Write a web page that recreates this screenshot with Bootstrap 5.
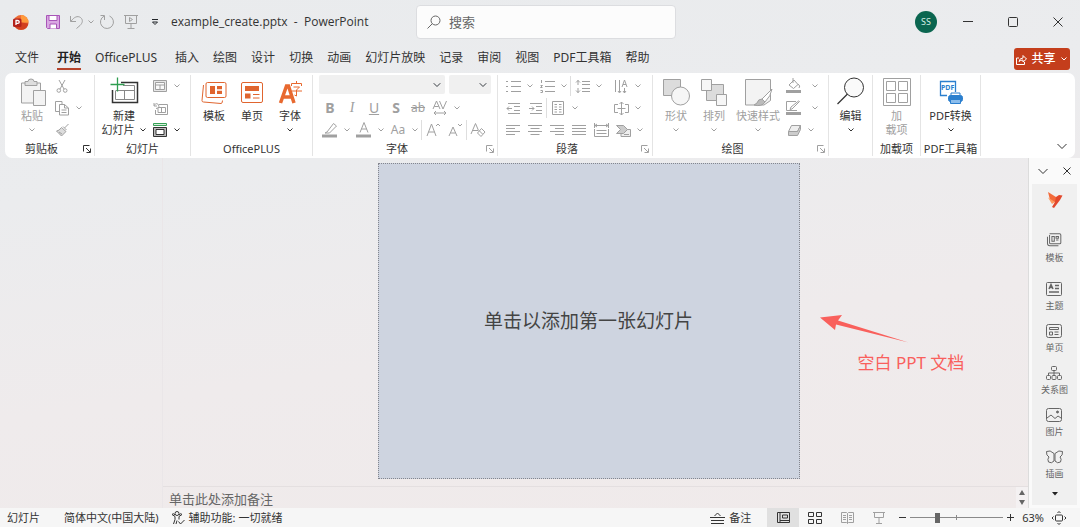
<!DOCTYPE html>
<html lang="zh-CN">
<head>
<meta charset="utf-8">
<meta name="viewport" content="width=device-width, initial-scale=1">
<title>example_create.pptx - PowerPoint</title>
<link href="https://cdn.jsdelivr.net/npm/bootstrap@5.3.0/dist/css/bootstrap.min.css" rel="stylesheet">
<style>
body{font-family:"Noto Sans","Noto Sans CJK SC",sans-serif;font-size:12px;line-height:16px;color:#333;background:linear-gradient(172deg,#e9ebed 0%,#ebecee 30%,#efebec 62%,#f0eaea 100%)}
button{font:inherit;color:inherit;background:none;border:0;padding:0}
svg{display:block;fill:none;stroke:currentColor;flex:none}
svg.solid{stroke:none}
.off{color:#a0a0a0}
.titlebar{height:44px;padding-left:12px}
.qat button{width:24px;height:22px}
.qat .undo{width:22px}
.qat .undo-list{width:8px;height:22px}
.doc-title{font-family:"Open Sans","Noto Sans CJK SC",sans-serif}
.search-box{width:260px;height:34px;background:#fcfcfc;border:1px solid #dcdde0;border-radius:4px;padding:0 10px;color:#666}
.search-box input{font-size:13px;line-height:18px;border:0;background:none;outline:0;min-width:0}
.search-box input::placeholder{color:#666;opacity:1}
.side-part{flex:1 1 0;min-width:0}
.avatar{width:22px;height:22px;background:#0b6650;color:#d8efe6;font-size:9px}
.tabs-row{height:29px;padding:0 10px 0 15px}
.tab-list{gap:14px;padding-top:5px}
.tabs-row a{color:#333;text-decoration:none;line-height:18px;white-space:nowrap;padding-bottom:1px;border-bottom:2px solid transparent}
.tabs-row a.active{font-weight:700;border-color:#b5432b;color:#222}
.share{background:#c43e1c;color:#fff;height:22px;width:56px;border-radius:3px;font-weight:500}
.ribbon{background:#fff;border-radius:7px;margin:0 5px;height:85px}
.group{border-right:1px solid #e4e4e4;margin:2px 0;display:flex;flex-direction:column;font-size:11px;line-height:14px;flex:none}
.g-body{height:66px;display:flex}
.g-font{padding:0 6px}
.g-label{height:15px;display:flex;align-items:center}
.g-label span{flex:1;text-align:center;white-space:nowrap}
.g-label button{width:16px;padding-left:4px}
.big{width:38px;padding-top:2px;display:flex;flex-direction:column;align-items:center;white-space:nowrap}
.big>svg:first-child{margin-bottom:2px}
.line{height:22px;display:flex;align-items:center}
.cell{width:22px;height:22px;display:flex;align-items:center;justify-content:center;flex:none}
.win-btn{width:45px;height:30px;display:flex;align-items:center;justify-content:center}
.drop{width:12px;height:22px;display:flex;align-items:center;justify-content:center;flex:none}
.vr-line{width:1px;height:20px;background:#dedede}
.txt{font-size:14px;line-height:22px}
.font-pick,.font-pick:disabled{background-color:#f0f0f0;border:0;border-radius:2px;height:19px;padding:0;background-size:8px;background-position:right 4px center}
.thumbs{width:163px;border-right:1px solid #eae6e8}
.stage{display:grid;grid-template-columns:1fr auto 1fr;padding:5px 14px 7px 0;flex:1 1 auto}
.slide{height:316px;aspect-ratio:422/316;background:#ced4e0;border:1px dotted #84868e;font-size:19px;line-height:26px;color:#444}
.note-mark{color:#f9605c;font-size:17px;line-height:24px;padding:152px 0 0 20px}
.note-mark p{margin:6px 0 0 38px;white-space:nowrap}
.notes{height:22px;border-top:1px solid #e4dfe0}
.notes input{font-size:13px;line-height:18px;border:0;background:none;padding:2px 6px 0;outline:0}
.notes input::placeholder{color:#666;opacity:1}
.spin{width:12px;background:#f4f1f2}
.dock{width:52px;background:#fafafa;border-left:1px solid #dcdcdc;padding:0 3px 3px}
.dock-head{height:26px;padding:0 6px}
.dock-list{background:#f0f0f0;font-size:9px;line-height:12px;color:#666}
.dock-list button{height:42px;display:flex;flex-direction:column;align-items:center;gap:4px;padding-top:4px}
.status{height:19px;background:#f6f6f6;font-size:11px;padding:0 14px 0 7px}
.view-btn{width:32px;height:19px;display:flex;align-items:center;justify-content:center}
.view-btn.active{background:#e0e0e0}
.zoom-range{appearance:none;width:93px;height:12px;background:linear-gradient(#8a8a8a,#8a8a8a) center/100% 1px no-repeat,linear-gradient(#8a8a8a,#8a8a8a) center/1px 5px no-repeat;margin:0}
.zoom-range::-webkit-slider-thumb{appearance:none;width:5px;height:10px;background:#666}
</style>
</head>
<body class="d-flex flex-column min-vh-100">
<svg width="0" height="0" class="position-absolute" aria-hidden="true">
<symbol id="chev" viewBox="0 0 8 6"><path d="M1.500 1.500 4 4 6.500 1.500"/></symbol>
<symbol id="launch" viewBox="0 0 10 10"><path d="M1.500 7.500V1.500H7.500M4 4l4 4M8.500 4.500v4h-4"/></symbol>
<symbol id="tpl" viewBox="0 0 30 30"><rect x="7" y="5.500" width="20" height="15" rx="1.500"/><path d="M4.500 8 3 23.500q0 1.500 1.500 1.500L22 26.500q1.500 0 1.500-3"/><path fill="currentColor" stroke="none" d="M11 9h5v8h-5zM18 9h5v3.200h-5zM18 13.700h5V17h-5z"/></symbol>
<symbol id="page" viewBox="0 0 30 30"><rect x="4.500" y="5.500" width="21" height="20" rx="1.500"/><path d="M8 9h14v5H8zM8 16.500h5.500v5H8z" fill="currentColor" stroke="none"/><path d="M16 17.500h6.500M16 21h6.500"/></symbol>
</svg>

<header class="titlebar d-flex align-items-center">
  <div class="side-part d-flex align-items-center">
    <svg width="17" height="17" viewBox="0 0 17 17" class="solid me-2"><circle cx="9" cy="8.500" r="7.500" fill="#ed6c35"/><path d="M9 1a7.500 7.500 0 0 1 7.500 7.500H9z" fill="#ff9a3c"/><path d="M2 11a7.500 7.500 0 0 0 14.400-1.500L9 8.500z" fill="#d2401f"/><rect x="1" y="4.500" width="8.500" height="8.500" rx="1.500" fill="#b4231b"/><path d="M4 11V6.500h1.800a1.400 1.400 0 0 1 0 2.900H4" stroke="#fff" stroke-width="1.300"/></svg>
    <div class="qat off d-flex align-items-center">
      <button class="cell ms-1" aria-label="保存"><svg width="16" height="16" viewBox="0 0 16 16" color="#a855b8"><path d="M1.500 1.500h13v13h-12l-1-1z" fill="#d9a8e2"/><path d="M4 1.500h8v5H4zM5 14.500v-4.500h6.500v4.500" fill="#fff"/></svg></button>
      <button class="cell undo" aria-label="撤消"><svg width="15" height="16" viewBox="0 0 15 16"><path d="M1.500 2v5.500H7M2 7.300C5 3 8.500 1.500 11.500 3.500 14.500 6 13.500 9 11 11.500L7.500 14.500"/></svg></button>
      <button class="undo-list" aria-label="撤消列表"><svg width="8" height="6"><use href="#chev"/></svg></button>
      <button class="cell" aria-label="恢复"><svg width="16" height="16" viewBox="0 0 16 16"><path d="M10.500 2a6.500 6.500 0 1 1-5.500.2M1.500 1.500H5.500V6"/></svg></button>
      <button class="cell" aria-label="从头开始"><svg width="16" height="16" viewBox="0 0 16 16"><path d="M1 1.500h14M2.500 1.500v8h11v-8M8 9.500v5M4.500 14.500h7M6.500 3.500v4l3-2z"/></svg></button>
      <button class="cell text-dark" aria-label="自定义"><svg width="8" height="8" viewBox="0 0 8 8"><path d="M1 1.500h6M1.500 4 4 6.500 6.500 4z"/></svg></button>
    </div>
    <span class="doc-title ms-1 text-nowrap">example_create.pptx&nbsp; - &nbsp;PowerPoint</span>
  </div>
  <label class="search-box d-flex align-items-center gap-2"><svg width="14" height="14" viewBox="0 0 14 14"><circle cx="8.500" cy="5.500" r="4.500"/><path d="M5.300 8.700.5 13.500"/></svg><input type="search" class="p-0" placeholder="搜索" aria-label="搜索"></label>
  <div class="side-part d-flex align-items-center justify-content-end">
    <button class="avatar rounded-circle me-2" aria-label="帐户">SS</button>
    <button class="win-btn" aria-label="最小化"><svg width="10" height="10"><path d="M0 4.500h10"/></svg></button>
    <button class="win-btn" aria-label="最大化"><svg width="10" height="10"><rect x=".5" y=".5" width="9" height="9" rx="1"/></svg></button>
    <button class="win-btn" aria-label="关闭"><svg width="10" height="10"><path d="m.5.5 9 9m0-9-9 9"/></svg></button>
  </div>
</header>

<nav class="tabs-row d-flex align-items-start justify-content-between" aria-label="功能区">
  <div class="tab-list d-flex">
    <a href="#" class="me-1">文件</a><a href="#" class="active">开始</a><a href="#" class="me-1">OfficePLUS</a><a href="#">插入</a><a href="#">绘图</a><a href="#">设计</a><a href="#">切换</a><a href="#">动画</a><a href="#">幻灯片放映</a><a href="#">记录</a><a href="#">审阅</a><a href="#">视图</a><a href="#">PDF工具箱</a><a href="#">帮助</a>
  </div>
  <button class="share d-flex align-items-center justify-content-center gap-1 mt-1"><svg width="11" height="11" viewBox="0 0 11 11"><path d="M3 4H.500v6.500h8V8M3 7.500Q3.500 4 7 4V1.500L10.500 5 7 8V6Q4.500 6 3 7.500z"/></svg>共享<svg width="8" height="6"><use href="#chev"/></svg></button>
</nav>

<section class="ribbon d-flex" aria-label="开始">
  <div class="group" style="width:90px">
    <div class="g-body off ps-2">
      <button class="big"><svg width="30" height="30" viewBox="0 0 30 30"><path d="M4.500 6h19v20h-19z" fill="#f3f3f3"/><path d="M8 8.500V4.500h3q0-2.500 3-2.500t3 2.500h3v4z" fill="#ddd"/><path d="M16.500 13.500h12v15h-12z" fill="#f3f3f3"/></svg>粘贴<svg width="8" height="14" viewBox="0 -4 8 14"><use href="#chev" width="8" height="6"/></svg></button>
      <div>
        <button class="cell" aria-label="剪切"><svg width="14" height="14" viewBox="0 0 14 14"><path d="m4 1 5 9M10 1 5 10"/><circle cx="3.800" cy="11.500" r="1.800"/><circle cx="10.200" cy="11.500" r="1.800"/></svg></button>
        <button class="cell" aria-label="复制"><svg width="16" height="16" viewBox="0 0 16 16"><path d="M5 11.500H1.500v-10H8V4M5.500 4.500h5l4 3.500v7h-9zM10.500 4.500V8h4M7.500 10h5M7.500 12.500h5"/></svg></button>
        <button class="cell" aria-label="格式刷"><svg width="15" height="14" viewBox="0 0 15 14"><path d="m13.500 1-4 4M6.500 4.500l4.500 4-4.500 4.500L1.500 8Q4 8 6.500 4.500z" fill="#ddd"/><path d="M8 3.500l3.500 3.500M4 9l3 2"/></svg></button>
      </div>
      <button class="drop align-self-center" aria-label="复制选项"><svg width="8" height="6"><use href="#chev"/></svg></button>
    </div>
    <div class="g-label"><span>剪贴板</span><button aria-label="剪贴板选项"><svg width="10" height="10"><use href="#launch"/></svg></button></div>
  </div>

  <div class="group" style="width:96px">
    <div class="g-body ps-1">
      <button class="big" style="width:50px"><svg width="30" height="30" viewBox="0 0 30 30"><path d="M12 5.500h16.500v20h-25V13" stroke-width="1.500"/><path d="M14 8.500h11.500v14h-19V14M6.500 13.500h19M15.500 13.500v9" stroke="#888"/><path d="M8.500.500v14M1.500 7.500h14" stroke="#2e9e50" stroke-width="1.300"/></svg>新建<span class="d-flex align-items-center gap-1">幻灯片<svg width="8" height="6"><use href="#chev"/></svg></span></button>
      <div>
        <div class="line off"><button class="cell" aria-label="版式"><svg width="14" height="12"><path d="M.5.5h13v11H.5z" fill="#e7e7e7"/><path d="M2.500 2.500h9v7h-9zM2.500 5h9M7 5v4.500" fill="#fafafa"/></svg></button><button class="drop" aria-label="版式列表"><svg width="8" height="6"><use href="#chev"/></svg></button></div>
        <div class="line off"><button class="cell" aria-label="重置"><svg width="15" height="13"><path d="M6 2.500h8.500v10h-12V8M5 5.500h7.500v5H5zM8.500 5.500v5M1 1v3h3M1 3.500Q4 0 5.500 3T3 6.500"/></svg></button></div>
        <div class="line"><button class="cell" aria-label="节"><svg width="14" height="14"><path d="M.5.5h13v2H.5z" stroke="#35a055" fill="#d9efdf"/><path d="M.5 4.500h13v9H.5z" fill="#bbb"/><path d="M3 6.500h8v5H3z" fill="#fff"/></svg></button><button class="drop" aria-label="节列表"><svg width="8" height="6"><use href="#chev"/></svg></button></div>
      </div>
    </div>
    <div class="g-label"><span>幻灯片</span></div>
  </div>

  <div class="group" style="width:122px">
    <div class="g-body ps-1">
      <button class="big"><svg width="30" height="30" color="#e0652f"><use href="#tpl"/></svg>模板</button>
      <button class="big"><svg width="30" height="30" color="#e0652f"><use href="#page"/></svg>单页</button>
      <button class="big"><svg width="30" height="30" viewBox="0 0 30 30" color="#e8692f"><path d="m5.500 26 6-17h2l5.500 17M8 20h9" stroke-width="3.500"/><path d="M21.500 4v2M16.500 9V6.500h10V9M18.500 10h6l-3 3v6l-2-1M16.500 14h10.500"/></svg>字体<svg width="8" height="14" viewBox="0 -4 8 14"><use href="#chev" width="8" height="6"/></svg></button>
    </div>
    <div class="g-label"><span>OfficePLUS</span></div>
  </div>

  <div class="group" style="width:185px">
    <div class="g-body g-font off flex-column">
      <div class="line align-items-start gap-1"><select class="form-select font-pick" style="width:128px" disabled aria-label="字体"></select><select class="form-select font-pick" style="width:43px" disabled aria-label="字号"></select></div>
      <div class="line txt"><button class="cell fw-bold">B</button><button class="cell fst-italic" style="font-family:'Liberation Serif',serif">I</button><button class="cell text-decoration-underline">U</button><button class="cell fw-bold">S</button><button class="cell text-decoration-line-through" style="font-size:12px">ab</button><button class="cell" aria-label="字符间距"><svg width="16" height="16" viewBox="0 0 16 16"><path d="m1 9 3.500-8L8 9M2.200 6.500h4.500M7.500 1 11 9l3.500-8M2 13h12M4 11l-2 2 2 2M12 11l2 2-2 2"/></svg></button><button class="drop" aria-label="间距列表"><svg width="8" height="6"><use href="#chev"/></svg></button></div>
      <div class="line txt"><button class="cell" aria-label="突出显示"><svg width="16" height="16"><path d="M5 10 11.500 1.500l3 2.500L7.500 11H3z"/><path d="M0 14h15" stroke-width="3"/></svg></button><button class="drop" aria-label="突出显示列表"><svg width="8" height="6"><use href="#chev"/></svg></button><button class="cell" aria-label="字体颜色"><svg width="16" height="16"><path d="m4 10.500 4-10 4 10M5.300 7h5.400"/><path d="M0 14h15" stroke-width="3"/></svg></button><button class="drop" aria-label="颜色列表"><svg width="8" height="6"><use href="#chev"/></svg></button><button class="cell" style="font-size:12px">Aa</button><button class="drop" aria-label="大小写列表"><svg width="8" height="6"><use href="#chev"/></svg></button><i class="vr-line"></i><button class="cell" aria-label="增大字号"><svg width="16" height="16"><path d="m2 14 4.500-12L11 14M3.500 10h6M11 4l2-2 2 2"/></svg></button><button class="cell" aria-label="减小字号"><svg width="16" height="16"><path d="m2 14 4-9 4 9M3.500 11h5M11 2l2 2 2-2"/></svg></button><i class="vr-line"></i><button class="cell" aria-label="清除格式"><svg width="16" height="16"><path d="M1 12 5.500 1.500 8.500 8.500M2.700 8.500H8M7.500 11l4-4.500 3.500 3.500-4 4.500zM9.500 9l3 3"/></svg></button></div>
    </div>
    <div class="g-label"><span>字体</span><button class="off" aria-label="字体选项"><svg width="10" height="10"><use href="#launch"/></svg></button></div>
  </div>

  <div class="group" style="width:155px">
    <div class="g-body off flex-column ps-1">
      <div class="line"><button class="cell" aria-label="项目符号"><svg width="15" height="13"><path d="M0 1.500h2M0 6.500h2M0 11.500h2M5 1.500h10M5 6.500h10M5 11.500h10"/></svg></button><button class="drop" aria-label="项目符号列表"><svg width="8" height="6"><use href="#chev"/></svg></button><button class="cell" aria-label="编号"><svg width="15" height="13"><path d="M1.500 0v3M.5 5.500h2l-2 2h2M.5 10.500h2v2h-2M5 1.500h10M5 6.500h10M5 11.500h10"/></svg></button><button class="drop" aria-label="编号列表"><svg width="8" height="6"><use href="#chev"/></svg></button><i class="vr-line"></i><button class="cell" aria-label="行距"><svg width="15" height="13"><path d="M3 0v5M3 8v5M1 2.500 3 .5l2 2M1 10.500l2 2 2-2M7 1.500h8M7 4.500h8M7 8.500h8M7 11.500h8"/></svg></button><button class="drop" aria-label="行距列表"><svg width="8" height="6"><use href="#chev"/></svg></button><button class="cell ms-auto" aria-label="文字方向"><svg width="15" height="15"><path d="M1.500 1v12M5.500 1v12M4 12l1.500 2L7 12M8 8l2.500-7L13 8M9 5.500h3M10.500 9v5M9 12l1.500 2 1.500-2"/></svg></button><button class="drop me-2" aria-label="方向列表"><svg width="8" height="6"><use href="#chev"/></svg></button></div>
      <div class="line"><button class="cell" aria-label="减少缩进"><svg width="15" height="13"><path d="M2 1.500h12M8 4.500h6M8 8.500h6M2 11.500h12M1 6.500h5M3 4.500l-2 2 2 2"/></svg></button><button class="cell" aria-label="增加缩进"><svg width="15" height="13"><path d="M2 1.500h12M8 4.500h6M8 8.500h6M2 11.500h12M1 6.500h5M4 4.500l2 2-2 2"/></svg></button><i class="vr-line"></i><button class="cell" aria-label="分栏"><svg width="12" height="14"><path d="M.5.5h11v13H.5zM2.500 3.500H5M2.500 6H5M2.500 8.500H5M2.500 11H5M7 3.500h2.500M7 6h2.500M7 8.500h2.500M7 11h2.500"/></svg></button><button class="drop" aria-label="分栏列表"><svg width="8" height="6"><use href="#chev"/></svg></button><button class="cell ms-auto" aria-label="对齐文本"><svg width="15" height="13"><path d="M4 2.500H.5v8H4M11 2.500h3.500v8H11M3.500 6.500h8M7.500 0v13M5.500 2l2-2 2 2M5.500 11l2 2 2-2"/></svg></button><button class="drop me-2" aria-label="对齐列表"><svg width="8" height="6"><use href="#chev"/></svg></button></div>
      <div class="line"><button class="cell" aria-label="左对齐"><svg width="14" height="12"><path d="M0 1.500h14M0 4.500h9M0 7.500h14M0 10.500h9"/></svg></button><button class="cell" aria-label="居中"><svg width="14" height="12"><path d="M0 1.500h14M2.500 4.500h9M0 7.500h14M2.500 10.500h9"/></svg></button><button class="cell" aria-label="右对齐"><svg width="14" height="12"><path d="M0 1.500h14M5 4.500h9M0 7.500h14M5 10.500h9"/></svg></button><button class="cell" aria-label="两端对齐"><svg width="14" height="12"><path d="M0 1.500h14M0 4.500h14M0 7.500h14M0 10.500h14"/></svg></button><button class="cell" aria-label="分散对齐"><svg width="15" height="14"><path d="M.5 0v5M14.500 0v5M1 2.500h13M3 1 1 2.500 3 4M12 1l2 1.500L12 4M.5 6v7.500h14V6M2.500 7.500h10M2.500 10.500h10"/></svg></button><button class="cell ms-auto" aria-label="SmartArt"><svg width="15" height="13"><path d="M5 5.500h9.500v7H5z" fill="#eee"/><path d="M.5 1.500h7l4 4-4 4H.5l4-4z" fill="#ccc"/><path d="M8 10.500h5"/></svg></button><button class="drop me-2" aria-label="SmartArt 列表"><svg width="8" height="6"><use href="#chev"/></svg></button></div>
    </div>
    <div class="g-label"><span>段落</span><button class="off" aria-label="段落选项"><svg width="10" height="10"><use href="#launch"/></svg></button></div>
  </div>

  <div class="group" style="width:176px">
    <div class="g-body off ps-1">
      <button class="big"><svg width="30" height="30" viewBox="0 0 30 30"><path d="M2.500 2.500h17v16h-17z" fill="#dcdcdc"/><circle cx="19.500" cy="19" r="9" fill="#f6f6f6"/></svg>形状<svg width="8" height="14" viewBox="0 -4 8 14"><use href="#chev" width="8" height="6"/></svg></button>
      <button class="big"><svg width="30" height="30" viewBox="0 0 30 30"><path d="M7.500 7.500h17v16h-17z" fill="#dcdcdc"/><path d="M2.500 2.500h10v11h-10zM17.500 17.500h10v11h-10z" fill="#f6f6f6"/></svg>排列<svg width="8" height="14" viewBox="0 -4 8 14"><use href="#chev" width="8" height="6"/></svg></button>
      <button class="big" style="width:50px"><svg width="30" height="30" viewBox="0 0 30 30"><path d="M2.500 2.500h25v21L21 28H2.500z" fill="#f3f3f3"/><path d="M29 12 19 22l3 3q6-6 7-13z" fill="#fff"/><path d="M19 22q-4 0-5 4l-3 2q8 2 11-3z" fill="#bbb"/></svg>快速样式<svg width="8" height="14" viewBox="0 -4 8 14"><use href="#chev" width="8" height="6"/></svg></button>
      <div>
        <div class="line"><button class="cell" aria-label="形状填充"><svg width="16" height="16"><path d="m3 7 5-5 4 4.500-4.500 4zM7 0v5M12 6q3 2 1 4"/><path d="M0 13.500h15" stroke-width="3"/></svg></button><button class="drop ms-1" aria-label="填充列表"><svg width="8" height="6"><use href="#chev"/></svg></button></div>
        <div class="line"><button class="cell" aria-label="形状轮廓"><svg width="16" height="16"><path d="M10 1.500H.5v9H11M13.500 1.500 6 9l-2 .5L5 7l7.500-6z"/><path d="M0 13.500h15" stroke-width="3"/></svg></button><button class="drop ms-1" aria-label="轮廓列表"><svg width="8" height="6"><use href="#chev"/></svg></button></div>
        <div class="line"><button class="cell" aria-label="形状效果"><svg width="15" height="13"><path d="M4.500 1.500h9l-3 6h-9z" fill="#eee"/><path d="M1.500 7.500h9l3-6v4l-3 6h-9z" fill="#ccc"/></svg></button><button class="drop" aria-label="效果列表"><svg width="8" height="6"><use href="#chev"/></svg></button></div>
      </div>
    </div>
    <div class="g-label"><span>绘图</span><button class="off" aria-label="绘图选项"><svg width="10" height="10"><use href="#launch"/></svg></button></div>
  </div>

  <div class="group" style="width:44px">
    <div class="g-body justify-content-center"><button class="big"><svg width="30" height="30" viewBox="0 0 30 30"><circle cx="18" cy="10.500" r="9.500" fill="#fafafa"/><path d="M11.500 17 1.500 27" stroke-width="1.300"/></svg>编辑<svg width="8" height="14" viewBox="0 -4 8 14"><use href="#chev" width="8" height="6"/></svg></button></div>
  </div>
  <div class="group" style="width:48px">
    <div class="g-body off justify-content-center"><button class="big"><svg width="30" height="30" viewBox="0 0 30 30"><path d="M1.500 1.500h27v27h-27zM4.500 4.500h9v9h-9zM16.500 4.500h9v9h-9zM4.500 16.500h9v9h-9zM16.500 16.500h9v9h-9z"/></svg>加<span>载项</span></button></div>
    <div class="g-label"><span>加载项</span></div>
  </div>
  <div class="group" style="width:60px">
    <div class="g-body justify-content-center"><button class="big"><svg width="30" height="30" viewBox="0 0 30 30" color="#2b7fce"><path d="M11 18.500H4.500v-14h15V15" stroke-width="1.300"/><text x="5" y="13" font-size="7" fill="#2b7fce" stroke="none" font-weight="700">PDF</text><path d="M15 19v-3h9v3" /><rect x="12.500" y="18.500" width="14" height="6" rx="2" fill="#2b7fce"/><path d="M14.500 22.500h10v4h-10z" fill="#8bbdec"/></svg>PDF转换<svg width="8" height="14" viewBox="0 -4 8 14"><use href="#chev" width="8" height="6"/></svg></button></div>
    <div class="g-label"><span>PDF工具箱</span></div>
  </div>
  <button class="ms-auto align-self-end mb-2 me-2" aria-label="折叠功能区"><svg width="10" height="7"><path d="m.5 1 4.500 4.500L9.500 1"/></svg></button>
</section>

<main class="d-flex flex-fill">
  <aside class="thumbs flex-shrink-0" aria-label="缩略图"></aside>
  <div class="d-flex flex-column flex-fill">
    <div class="stage">
      <span></span>
      <button class="slide d-flex align-items-center justify-content-center">单击以添加第一张幻灯片</button>
      <div class="note-mark">
        <svg class="solid" width="90" height="30" viewBox="0 0 90 30"><path d="M0 2.500 22 0 18 5.500 88.500 27.500 16 9.500l-1 5.500z" fill="#f9605c"/></svg>
        <p>空白 PPT 文档</p>
      </div>
    </div>
    <div class="notes d-flex">
      <input class="flex-fill" type="text" placeholder="单击此处添加备注" aria-label="备注">
      <div class="spin d-flex flex-column align-items-center justify-content-around"><button aria-label="向上"><svg class="solid" width="6" height="5"><path d="M0 5 3 0l3 5z" fill="#666"/></svg></button><button aria-label="向下"><svg class="solid" width="6" height="5"><path d="m0 0 3 5 3-5z" fill="#666"/></svg></button></div>
    </div>
  </div>
  <aside class="dock d-flex flex-column flex-shrink-0">
    <div class="dock-head d-flex align-items-center justify-content-between"><button aria-label="折叠"><svg width="10" height="7"><path d="m.5 1 4.500 4.500L9.500 1"/></svg></button><button aria-label="关闭窗格"><svg width="8" height="8"><path d="m.5.5 7 7m0-7-7 7"/></svg></button></div>
    <div class="dock-list flex-fill d-flex flex-column align-items-center">
      <svg width="16" height="16" viewBox="0 0 16 16" class="solid mt-2 mb-3"><path d="M1 0 9 5v6L3 8z" fill="#f36b3b"/><path d="m9 5 3-2 3.500.5L13 8 7 16l-2-1 3-5z" fill="#e2482c"/><path d="M1 5.500 8 10l-3 2z" fill="#ff9a5e"/></svg>
      <button class="mt-1 mb-2"><svg width="16" height="16" viewBox="2 2 27 27"><path stroke-width="1.700" d="M8 5h17q2 0 2 2v13q0 2-2 2H10q-2 0-2-2V7M4.500 10v11q0 4 4 4H23M12 9.500h4v8h-4zM19 9.500h4v3h-4zM19 15.500h4"/></svg>模板</button>
      <button><svg width="16" height="14"><rect x=".5" y=".5" width="15" height="13" rx="1"/><path d="m3 7 2-4.500L7 7M3.500 5.500h3M9 3.500h4M9 6.500h4M3 10h10" stroke-width="1.500"/></svg>主题</button>
      <button><svg width="16" height="14"><rect x=".5" y=".5" width="15" height="13" rx="2"/><path d="M3.500 3.500h9v2h-9zM3.500 8h3v3h-3zM8.500 8h4M8.500 10.500h4"/></svg>单页</button>
      <button><svg width="16" height="14"><rect x="5.500" y=".5" width="5" height="4" rx="1"/><rect x=".5" y="9.500" width="4" height="4" rx="1"/><rect x="6" y="9.500" width="4" height="4" rx="1"/><rect x="11.500" y="9.500" width="4" height="4" rx="1"/><path d="M8 4.500v5M2.500 9.500V7h11v2.500"/></svg>关系图</button>
      <button><svg width="16" height="14"><rect x=".5" y=".5" width="15" height="13" rx="2"/><path d="m1 10 4-3 4 3.500L12 8l3 2"/><circle cx="11.500" cy="4" r="1" fill="currentColor"/></svg>图片</button>
      <button><svg width="17" height="14" viewBox="0 0 17 14"><path d="M8 3.500Q4-.5.500 1.500q-.5 4 2.500 5.500-2 2-.5 5 3 2 5.500-1zM9 3.500q4-4 7.500-2 .5 4-2.500 5.500 2 2 .5 5-3 2-5.500-1z"/></svg>插画</button>
      <svg width="6" height="4" class="solid mt-1"><path d="m0 0 3 3.500L6 0z" fill="#222"/></svg>
    </div>
  </aside>
</main>

<footer class="status d-flex align-items-center">
  <span>幻灯片</span>
  <span class="ms-4">简体中文(中国大陆)</span>
  <button class="d-flex align-items-center gap-1 ms-2 ps-1"><svg width="14" height="14" viewBox="0 0 14 14"><circle cx="6" cy="2.500" r="2"/><path d="M1 3.500 4 5.500v3L2.500 13M11 3.500 8 5.500v3M1 3.500Q2 1.500 4 4M11 3.500Q10 1.500 8 4M5 13l1-3.500M7.500 10.500l2 2.500 4-4"/></svg>辅助功能: 一切就绪</button>
  <button class="d-flex align-items-center ms-auto me-3"><svg width="15" height="12" class="me-1"><path d="M4.500 4 7.500 1l3 3M0 5.500h15M1 8.500h13M1 11.500h13"/></svg>备注</button>
  <button class="view-btn active" aria-label="普通视图"><svg width="13" height="11"><path d="M.5.5h12v10H.5zM3 .500v10M5.500 3h5v3h-5zM3 8.500h9"/></svg></button>
  <button class="view-btn" aria-label="幻灯片浏览"><svg width="14" height="12"><path d="M.5.5h5v4h-5zM8.500.5h5v4h-5zM.5 7.500h5v4h-5zM8.500 7.500h5v4h-5z"/></svg></button>
  <button class="view-btn off" aria-label="阅读视图"><svg width="13" height="12"><path d="M6.500 1.500v10M.5.5h5l1 1 1-1h5v10h-5l-1 1-1-1h-5zM2 3.500h3M2 5.500h3M2 7.500h3M8 3.500h3M8 5.500h3M8 7.500h3"/></svg></button>
  <button class="view-btn off" aria-label="放映"><svg width="12" height="12"><path d="M0 .500h12M1.500.500v5h9v-5M6 5.500v6M3 11.500h6"/></svg></button>
  <button class="mx-1" aria-label="缩小"><svg width="7" height="7"><path d="M0 3.500h7"/></svg></button>
  <input type="range" class="zoom-range" min="0" max="300" value="85" aria-label="缩放">
  <button class="mx-1" aria-label="放大"><svg width="7" height="7"><path d="M0 3.500h7M3.500 0v7"/></svg></button>
  <span class="ms-1 me-2">63%</span>
  <button aria-label="适应窗口"><svg width="14" height="14"><rect x="3.500" y="4" width="7" height="6" rx="1"/><path d="m5.500 2 1.500-1.500L8.500 2M5.500 12 7 13.500 8.500 12M1.500 5.500 0 7l1.500 1.500M12.500 5.500 14 7l-1.500 1.500"/></svg></button>
</footer>
<script src="https://cdn.jsdelivr.net/npm/bootstrap@5.3.0/dist/js/bootstrap.bundle.min.js"></script>
</body>
</html>
